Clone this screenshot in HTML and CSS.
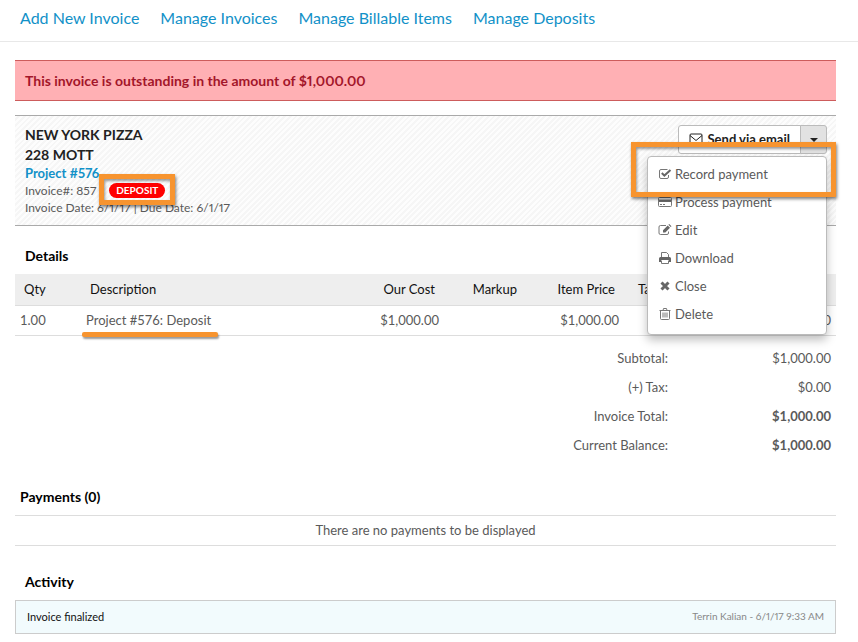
FILE: index.html
```html
<!DOCTYPE html>
<html lang="en">
<head>
    <meta charset="UTF-8">
    <meta name="viewport" content="width=device-width, initial-scale=1.0">
    <title>Invoice 857</title>
    <link rel="stylesheet" href="styles.css">
</head>
<body>
    <nav class="navbar">
        <a href="#">Add New Invoice</a>
        <a href="#">Manage Invoices</a>
        <a href="#">Manage Billable Items</a>
        <a href="#">Manage Deposits</a>
    </nav>

    <main class="container">
        <div class="alert">This invoice is outstanding in the amount of $1,000.00</div>

        <section class="invoice-header">
            <div class="invoice-info">
                <h1>NEW YORK PIZZA</h1>
                <h1>228 MOTT</h1>
                <a class="project-link" href="#">Project #576</a>
                <p class="invoice-number">Invoice#: 857 <span class="badge-wrap"><span class="badge">DEPOSIT</span><span class="highlight highlight-badge"></span></span></p>
                <p>Invoice Date: 6/1/17 | Due Date: 6/1/17</p>
            </div>

            <div class="btn-group">
                <button type="button" class="btn">
                    <svg class="icon-mail" viewBox="0 0 14 12"><rect x="1" y="1" width="12" height="10" rx="1"/><path d="M1 2.5 L7 7.5 L13 2.5"/></svg>
                    Send via email
                </button>
                <button type="button" class="btn btn-toggle" aria-label="More actions"><span class="caret"></span></button>

                <ul class="menu">
                    <li>
                        <a href="#">
                            <svg class="icon" viewBox="0 0 14 14"><path class="line" d="M10.5 8v2a1.500 1.500 0 0 1-1.500 1.500H3A1.500 1.500 0 0 1 1.500 10V4A1.500 1.500 0 0 1 3 2.500h6.500"/><path class="thick" d="M3.800 6l2.600 2.600L12.500 3"/></svg>
                            Record payment
                        </a>
                        <span class="highlight highlight-item"></span>
                    </li>
                    <li>
                        <a href="#">
                            <svg class="icon" viewBox="0 0 14 14"><rect class="line" x="0.5" y="2.5" width="13" height="9" rx="1"/><path d="M1 4.500h12v2.500H1z"/><path class="line" d="M2 9.500h2M5 9.500h2"/></svg>
                            Process payment
                        </a>
                    </li>
                    <li>
                        <a href="#">
                            <svg class="icon" viewBox="0 0 14 14"><path class="line" d="M10.500 8.500V10A1.500 1.500 0 0 1 9 11.500H2.500A1.500 1.500 0 0 1 1 10V4a1.500 1.500 0 0 1 1.500-1.500H8"/><path d="M5 9.500V7.200L9.700 2.500l2.300 2.300L7.300 9.500zM10.400 1.800l.8-.8 2.300 2.300-.8.8z"/></svg>
                            Edit
                        </a>
                    </li>
                    <li>
                        <a href="#">
                            <svg class="icon" viewBox="0 0 14 14"><path class="line" d="M3.500 6.500v-5h5l2 2v3M3.500 9.500v3h7v-3"/><path d="M1 7.500Q1 6 2.500 6h9Q13 6 13 7.500V11h-2V9H3v2H1z"/></svg>
                            Download
                        </a>
                    </li>
                    <li>
                        <a href="#">
                            <svg class="icon" viewBox="0 0 14 14"><path class="cross" d="M3.500 3.500l7 7M10.500 3.500l-7 7"/></svg>
                            Close
                        </a>
                    </li>
                    <li>
                        <a href="#">
                            <svg class="icon" viewBox="0 0 14 14"><path class="line" d="M1.500 3.500h11M5 3.500l.5-2h3l.5 2M2.500 3.500v8q0 1 1 1h7q1 0 1-1v-8M5 5.500v5M7 5.500v5M9 5.500v5"/></svg>
                            Delete
                        </a>
                    </li>
                </ul>
            </div>
        </section>

        <section>
            <h2>Details</h2>
            <table class="details">
                <colgroup>
                    <col class="col-qty"><col><col class="col-cost"><col class="col-markup"><col class="col-cost"><col class="col-tax"><col class="col-total">
                </colgroup>
                <thead>
                    <tr>
                        <th>Qty</th>
                        <th>Description</th>
                        <th class="num">Our Cost</th>
                        <th class="num">Markup</th>
                        <th class="num">Item Price</th>
                        <th class="tax">Tax</th>
                        <th class="num">Total</th>
                    </tr>
                </thead>
                <tbody>
                    <tr>
                        <td>1.00</td>
                        <td><span class="marked">Project #576: Deposit</span></td>
                        <td class="num">$1,000.00</td>
                        <td></td>
                        <td class="num">$1,000.00</td>
                        <td></td>
                        <td class="num">$1,000.00</td>
                    </tr>
                </tbody>
            </table>
            <table class="totals">
                <tr><th>Subtotal:</th><td>$1,000.00</td></tr>
                <tr><th>(+) Tax:</th><td>$0.00</td></tr>
                <tr><th>Invoice Total:</th><td><strong>$1,000.00</strong></td></tr>
                <tr><th>Current Balance:</th><td><strong>$1,000.00</strong></td></tr>
            </table>
        </section>

        <section class="payments">
            <h2>Payments (0)</h2>
            <p>There are no payments to be displayed</p>
        </section>

        <section class="activity">
            <h2>Activity</h2>
            <div class="activity-row">
                <span>Invoice finalized</span>
                <span class="activity-meta">Terrin Kalian - 6/1/17 9:33 AM</span>
            </div>
        </section>
    </main>
</body>
</html>
```
FILE: styles.css
```css
* {
    box-sizing: border-box;
}
body {
    font-family: Lato, "Liberation Sans", sans-serif;
    font-size: 13px;
    line-height: 17px;
    color: #5a5a5a;
    background-color: #fff;
    margin: 0;
}
a {
    color: #1291c8;
    text-decoration: none;
}
h1, h2, p {
    margin: 0;
}
.navbar {
    display: flex;
    gap: 21px;
    height: 42px;
    padding: 8px 20px;
    border-bottom: 1px solid #e8e8e8;
    font-size: 16px;
    line-height: 20px;
}
.container {
    padding: 18px 22px 8px 15px;
}
.alert {
    padding: 9px 10px;
    border: solid #cd5c5c;
    border-width: 1px 0;
    background-color: #ffb0b4;
    color: #a3162a;
    font-size: 14px;
    font-variant-numeric: proportional-nums;
    font-weight: bold;
    line-height: 21px;
}
.invoice-header {
    display: flex;
    justify-content: space-between;
    align-items: flex-start;
    margin-top: 14px;
    padding: 9px 9px 9px 10px;
    border: solid #aaa;
    border-width: 1px 0;
    background: repeating-linear-gradient(135deg, #fdfdfd 0 2px, #f6f6f6 2px 4px);
}
.invoice-header h1 {
    color: #222;
    font-size: 14px;
    line-height: 20px;
}
.invoice-info {
    font-size: 12px;
    font-variant-numeric: proportional-nums;
}
.project-link {
    display: block;
    font-size: 13px;
    font-weight: bold;
}
.invoice-number {
    display: flex;
    align-items: center;
    height: 17px;
}
.badge-wrap {
    position: relative;
    margin-left: 13px;
}
.badge {
    display: block;
    padding: 0 7px;
    border-radius: 8px;
    background-color: #f00;
    color: #fff;
    font-size: 10px;
    font-weight: bold;
    line-height: 15px;
}
.highlight {
    position: absolute;
    z-index: 2;
    border: 5px solid #f7942f;
    box-shadow: 1px 2px 3px rgba(0, 0, 0, 0.5), inset 1px 2px 3px rgba(0, 0, 0, 0.4);
    pointer-events: none;
}
.highlight-badge {
    inset: -9px -10px -7px;
}
.btn-group {
    position: relative;
    display: flex;
}
.btn {
    display: flex;
    align-items: center;
    gap: 5px;
    height: 29px;
    padding: 0 10px 2px;
    border: 1px solid #bbb;
    border-radius: 3px 0 0 3px;
    background-color: #fff;
    color: #222;
    font-family: inherit;
    font-size: 13px;
    font-weight: bold;
    cursor: pointer;
}
.btn-toggle {
    justify-content: center;
    width: 27px;
    margin-left: -1px;
    padding: 0;
    border-radius: 0 3px 3px 0;
    background-color: #e2e2e2;
}
.caret {
    border: 4px solid transparent;
    border-top-color: #222;
    border-bottom: 0;
}
.icon-mail {
    width: 14px;
    height: 12px;
    fill: none;
    stroke: #222;
}
.menu {
    position: absolute;
    top: 31px;
    right: 0;
    z-index: 1;
    width: 180px;
    margin: 0;
    padding: 3px 0 6px;
    border: 1px solid #bbb;
    border-radius: 4px;
    background-color: #fff;
    box-shadow: 0 5px 10px rgba(0, 0, 0, 0.25);
    list-style: none;
}
.menu li {
    position: relative;
}
.menu a {
    display: flex;
    align-items: center;
    gap: 3px;
    height: 28px;
    padding: 0 10px;
    color: #5a5a5a;
}
.highlight-item {
    inset: -18px -10px -9px -17px;
}
.icon {
    width: 14px;
    height: 14px;
    fill: #666;
}
.icon .line {
    fill: none;
    stroke: #777;
}
.icon .thick {
    fill: none;
    stroke: #666;
    stroke-width: 2;
}
.icon .cross {
    fill: none;
    stroke: #666;
    stroke-width: 3;
}
h2 {
    padding: 0 10px;
    color: #000;
    font-size: 14px;
    line-height: 20px;
}
.invoice-header + section {
    margin-top: 20px;
}
table {
    width: 100%;
    border-collapse: collapse;
}
th {
    font-weight: normal;
    text-align: left;
}
.details {
    table-layout: fixed;
    margin-top: 8px;
}
.details th {
    height: 31px;
    padding: 0 9px;
    background-color: #eee;
    color: #111;
}
.details td {
    height: 30px;
    padding: 0 5px;
    border: solid #ddd;
    border-width: 1px 0;
}
.details .num {
    text-align: right;
}
.details .tax {
    padding-left: 14px;
}
.col-qty {
    width: 66px;
}
.col-cost {
    width: 98px;
}
.col-markup {
    width: 82px;
}
.col-tax {
    width: 60px;
}
.col-total {
    width: 152px;
}
.marked {
    position: relative;
}
.marked::after {
    content: "";
    position: absolute;
    left: -4px;
    right: -7px;
    bottom: -9px;
    height: 5px;
    border-radius: 2px;
    background-color: #f7942f;
    box-shadow: 1px 2px 2px rgba(0, 0, 0, 0.4);
}
.totals {
    margin-top: 8px;
}
.totals th,
.totals td {
    height: 29px;
    padding: 0 5px;
    text-align: right;
}
.totals td {
    width: 163px;
}
.payments {
    margin-top: 27px;
}
.payments h2 {
    padding: 0 5px;
}
.payments p {
    margin-top: 8px;
    padding: 6px;
    border: solid #ddd;
    border-width: 1px 0;
    text-align: center;
}
.activity {
    margin-top: 26px;
}
.activity-row {
    display: flex;
    justify-content: space-between;
    margin-top: 8px;
    padding: 7px 11px 8px;
    border: 1px solid #ccc;
    background-color: #f2fbfd;
    color: #111;
    font-size: 11px;
}
.activity-meta {
    color: #888;
    font-size: 10px;
    font-variant-numeric: proportional-nums;
}
```
